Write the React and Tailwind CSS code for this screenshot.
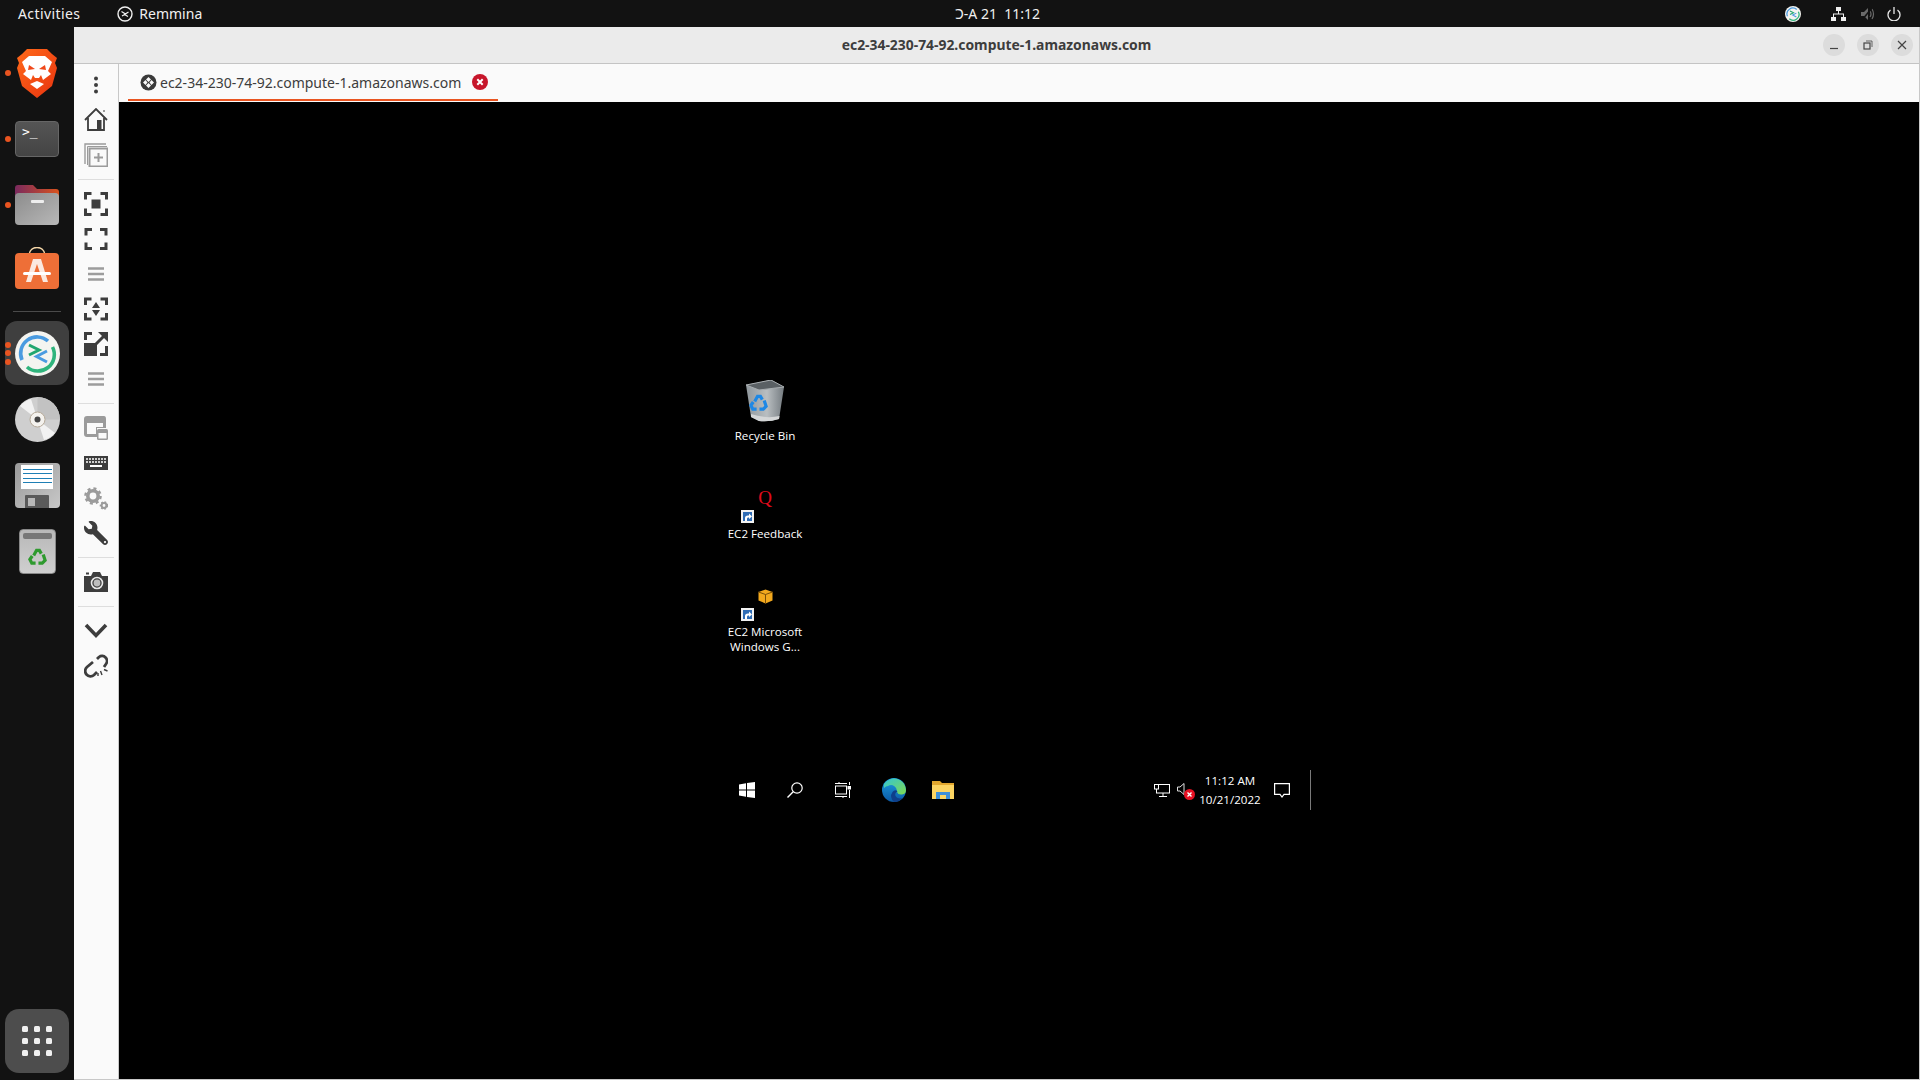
import { FaWrench } from 'react-icons/fa';

const HOST = 'ec2-34-230-74-92.compute-1.amazonaws.com';

const RemminaLogo = ({ size = 45 }) => (
  <svg width={size} height={size} viewBox="0 0 45 45">
    <circle cx="22.5" cy="22.5" r="22.5" fill="#f4f4f0" />
    <path d="M7 29 A16.5 16.5 0 0 1 33 10" fill="none" stroke="#4a9be0" strokeWidth="3.6" />
    <path d="M37.5 16 A16.5 16.5 0 0 1 12 36" fill="none" stroke="#2fb47c" strokeWidth="3.6" />
    <path d="M14 14 L24 19 L14 24" fill="none" stroke="#21a66f" strokeWidth="3" />
    <path d="M32 20 L21.5 25.5 L32 31" fill="none" stroke="#4a9be0" strokeWidth="3" />
  </svg>
);

const BraveLogo = () => (
  <svg width="40" height="49" viewBox="0 0 40 49">
    <defs>
      <linearGradient id="brave" x1="0" y1="0" x2="1" y2="1">
        <stop offset="0" stopColor="#ff6a1a" />
        <stop offset="1" stopColor="#e8330f" />
      </linearGradient>
    </defs>
    <path d="M10 0 H30 L35 5 L40 9 L38 14 L40 19 L35 37 L20 49 L5 37 L0 19 L2 14 L0 9 L5 5 Z" fill="url(#brave)" />
    <path d="M5 13 L12 7 H28 L35 13 L31 22 L34 25 L26 31 L24 26 L22 29 H18 L16 26 L14 31 L6 25 L9 22 Z" fill="#fff" />
    <path d="M13 35 L20 32 L27 35 L20 40 Z" fill="#fff" />
    <path d="M12 16 L18 20 L11 21 Z M28 16 L22 20 L29 21 Z" fill="#f0481a" />
  </svg>
);

const TerminalIcon = () => (
  <div className="w-[44px] h-[36px] rounded-[4px] bg-gradient-to-b from-[#555] to-[#444] border border-[#666] relative">
    <span className="absolute left-[6px] top-[1px] text-[13px] leading-[18px] text-white font-['DejaVu_Sans_Mono',monospace]">&gt;_</span>
  </div>
);

const FilesIcon = () => (
  <svg width="44" height="40" viewBox="0 0 44 40">
    <defs>
      <linearGradient id="folderTop" x1="0" y1="0" x2="1" y2="0">
        <stop offset="0" stopColor="#7a2a5e" />
        <stop offset="1" stopColor="#d9531e" />
      </linearGradient>
      <linearGradient id="folderBody" x1="0" y1="0" x2="1" y2="1">
        <stop offset="0" stopColor="#8c8c8c" />
        <stop offset="1" stopColor="#b8b8b8" />
      </linearGradient>
    </defs>
    <path d="M3 0 H18 L22 4 H41 Q44 4 44 7 V20 H0 V3 Q0 0 3 0 Z" fill="url(#folderTop)" />
    <rect x="0" y="8" width="44" height="32" rx="4" fill="url(#folderBody)" />
    <rect x="16" y="15" width="13" height="3" rx="1" fill="#eee" />
  </svg>
);

const StoreIcon = () => (
  <svg width="44" height="42" viewBox="0 0 44 42">
    <path d="M14 8 C15 -2 29 -2 30 8" fill="none" stroke="#f5d7a8" strokeWidth="1.6" />
    <rect x="0" y="6" width="44" height="36" rx="4" fill="#ee6f37" />
    <path d="M18 12 H26 L33 35 H28 L22 17 L16 35 H11 Z" fill="#fbe9df" />
    <rect x="8" y="25" width="28" height="3" rx="1.5" fill="#fff" />
  </svg>
);

const DiscIcon = () => (
  <svg width="45" height="45" viewBox="0 0 45 45">
    <circle cx="22.5" cy="22.5" r="22.5" fill="#cfcfcf" />
    <path d="M22.5 22.5 L5 9 A22 22 0 0 1 16 2 Z" fill="#f2f2f2" />
    <path d="M22.5 22.5 L40 36 A22 22 0 0 1 29 43 Z" fill="#f2f2f2" />
    <path d="M22.5 22.5 L22.5 0 A22.5 22.5 0 0 1 45 22.5 Z" fill="#c2c2c2" />
    <circle cx="22.5" cy="22.5" r="7.5" fill="#f4f2ee" stroke="#b5a998" />
    <circle cx="22.5" cy="22.5" r="3" fill="#444" />
  </svg>
);

const FloppyIcon = () => (
  <div className="w-[45px] h-[45px] rounded-[4px] bg-gradient-to-br from-[#9a9a9a] to-[#c8c8c8] relative overflow-hidden">
    <div className="mx-auto mt-[2px] w-[32px] h-[24px] bg-white flex flex-col gap-[3.5px] pt-[4px] px-[1.5px]">
      <div className="h-px bg-[#1f7fb5]" />
      <div className="h-px bg-[#1f7fb5]" />
      <div className="h-px bg-[#1f7fb5]" />
      <div className="h-px bg-[#1f7fb5]" />
    </div>
    <div className="absolute left-[10px] bottom-0 w-[24px] h-[13px] bg-[#5a5a5a] rounded-t-[1px]">
      <div className="ml-[3px] mt-[3px] w-[7px] h-[8px] bg-[#b8b8b8]" />
    </div>
  </div>
);

const RecycleGlyph = ({ size, color }) => (
  <svg width={size} height={size} viewBox="0 0 20 20" fill="none" stroke={color} strokeWidth="3.4">
    <path d="M6 9 L9 3.5 H12 L14 7" />
    <path d="M16 8 L18 14 L15 17 H11" />
    <path d="M8 17 H4 L2 13 L4.5 9.5" />
  </svg>
);

const TrashIcon = () => (
  <div className="w-[37px] h-[45px] rounded-[4px] bg-gradient-to-b from-[#b8b8b8] to-[#cfcfcf] border border-[#888] relative flex items-end justify-center pb-[7px]">
    <div className="absolute left-[3px] right-[3px] top-[3px] h-[6px] rounded-[2px] bg-[#777]" />
    <RecycleGlyph size={19} color="#2e9a2e" />
  </div>
);

const Dot = () => <div className="w-[6px] h-[6px] rounded-full bg-[#e95420]" />;

// one row per launcher, the height holds the vertical rhythm of the dock
const DockItem = ({ children, height, dots = 0, className = '' }) => (
  <div className={`relative flex items-center justify-center shrink-0 ${className}`} style={{ height }}>
    {dots > 0 && (
      <div className="absolute left-[5px] top-0 bottom-0 flex flex-col justify-center gap-[2.5px]">
        {Array.from({ length: dots }).map((_, i) => <Dot key={i} />)}
      </div>
    )}
    {children}
  </div>
);

const Dock = () => (
  <div className="w-[74px] shrink-0 bg-[#121212] flex flex-col">
    <DockItem height={66} dots={1} className="mt-[13px]"><BraveLogo /></DockItem>
    <DockItem height={66} dots={1}><TerminalIcon /></DockItem>
    <DockItem height={66} dots={1}><FilesIcon /></DockItem>
    <DockItem height={64} className="-mt-[2px]"><StoreIcon /></DockItem>
    <div className="mx-[13px] mt-[11px] h-px bg-[#4a4a4a] shrink-0" />
    <div className="h-[9px] shrink-0" />
    <div className="relative mx-[5px] h-[64px] rounded-[12px] bg-[#3f3f3f] flex items-center justify-center shrink-0">
      <div className="absolute left-0 top-0 bottom-0 flex flex-col justify-center gap-[2.5px]">
        <Dot /><Dot /><Dot />
      </div>
      <RemminaLogo />
    </div>
    <DockItem height={66} className="mt-[1px]"><DiscIcon /></DockItem>
    <DockItem height={66}><FloppyIcon /></DockItem>
    <DockItem height={66}><TrashIcon /></DockItem>
    <div className="mt-auto mx-[5px] mb-[7px] h-[64px] rounded-[14px] bg-[#4d4d4d] grid grid-cols-[6px_6px_6px] gap-[6px] place-content-center shrink-0">
      {Array.from({ length: 9 }).map((_, i) => (
        <div key={i} className="w-[6px] h-[6px] rounded-[1.5px] bg-[#f0f0f0]" />
      ))}
    </div>
  </div>
);

const TopBar = () => (
  <div className="h-[27px] shrink-0 bg-[#121212] flex items-center relative text-[14px] text-[#f0f0f0] font-['Noto_Sans',sans-serif]">
    <span className="ml-[18px] tracking-[0.4px]">Activities</span>
    <svg className="ml-[37px]" width="16" height="16" viewBox="0 0 16 16" fill="none" stroke="#f0f0f0">
      <circle cx="8" cy="8" r="7" strokeWidth="1.4" />
      <path d="M4.5 5.5 L8.5 8 L5 10 M11.5 6 L7.5 8.5 L11 10.5" strokeWidth="1.2" />
    </svg>
    <span className="ml-[6px]">Remmina</span>
    <span className="absolute left-[955px] whitespace-pre">Ɔ-A 21  11:12</span>
    <div className="ml-auto flex items-center">
      <RemminaLogo size={16} />
      <svg className="ml-[30px]" width="15" height="14" viewBox="0 0 15 14" fill="#f0f0f0">
        <rect x="5" y="0" width="5" height="4" />
        <rect x="0" y="10" width="5" height="4" />
        <rect x="10" y="10" width="5" height="4" />
        <path d="M7 4 H8 V6.5 H13 V10 H12 V7.5 H3 V10 H2 V6.5 H7 Z" />
      </svg>
      <svg className="ml-[15px]" width="14" height="14" viewBox="0 0 14 14" fill="none">
        <path d="M0 5 H3 L7 1 V13 L3 9 H0 Z" fill="#6a6a6a" />
        <path d="M9 4 Q11 7 9 10 M11 2 Q14 7 11 12" stroke="#6a6a6a" strokeWidth="1.2" />
        <path d="M1 13 L11 1" stroke="#121212" strokeWidth="1.6" />
      </svg>
      <svg className="ml-[12px] mr-[19px]" width="14" height="14" viewBox="0 0 14 14" fill="none" stroke="#e8e8e8" strokeWidth="1.3">
        <path d="M3.5 3 A6 6 0 1 0 10.5 3 M7 0 V7" />
      </svg>
    </div>
  </div>
);

const WinButton = ({ children }) => (
  <div className="w-[22px] h-[22px] rounded-full bg-[#dcdcdc] flex items-center justify-center">{children}</div>
);

const TitleBar = () => (
  <div className="h-[37px] shrink-0 bg-[#ebebeb] border-b border-[#c4c4c4] flex items-center relative">
    <div className="flex-1 text-center text-[13.9px] font-bold text-[#3d3d3d] font-['Noto_Sans',sans-serif]">{HOST}</div>
    <div className="absolute right-[6px] top-[7px] flex gap-[12px]">
      <WinButton>
        <svg width="10" height="10" viewBox="0 0 10 10"><path d="M1 8.5 H9" stroke="#444" strokeWidth="1.2" /></svg>
      </WinButton>
      <WinButton>
        <svg width="10" height="10" viewBox="0 0 10 10" fill="none" stroke="#444"><rect x="1" y="3" width="6" height="6" strokeWidth="1.2" /><path d="M3 1 H9 V7" strokeWidth="0.8" /></svg>
      </WinButton>
      <WinButton>
        <svg width="10" height="10" viewBox="0 0 10 10"><path d="M1 1 L9 9 M9 1 L1 9" stroke="#444" strokeWidth="1.2" /></svg>
      </WinButton>
    </div>
  </div>
);

const dark = '#3d3d3d';
const soft = '#9b9b9b';

const Corners = ({ x = 1.5, y = 1.5, w = 21, h = 21, c = 6 }) => (
  <path
    d={`M${x} ${y + c} V${y} H${x + c} M${x + w - c} ${y} H${x + w} V${y + c} M${x + w} ${y + h - c} V${y + h} H${x + w - c} M${x + c} ${y + h} H${x} V${y + h - c}`}
    fill="none"
    stroke={dark}
    strokeWidth="3"
  />
);

const Glyph = ({ children }) => (
  <svg width="24" height="24" viewBox="0 0 24 24">{children}</svg>
);

const Lines = () => (
  <Glyph>
    <path d="M4 6.5 H20 M4 12 H20 M4 17.5 H20" stroke="#9c9c9c" strokeWidth="2.4" />
  </Glyph>
);

const toolIcons = {
  dots: <Glyph><circle cx="12" cy="5.5" r="2" fill={dark} /><circle cx="12" cy="12" r="2" fill={dark} /><circle cx="12" cy="18.5" r="2" fill={dark} /></Glyph>,
  home: (
    <Glyph>
      <path d="M1 12 L12 1 L23 12" fill="none" stroke={dark} strokeWidth="1.8" />
      <path d="M4 10 V22 H20 V10" fill="none" stroke={dark} strokeWidth="1.8" />
      <rect x="13" y="12" width="4.5" height="10" fill={dark} />
      <rect x="19" y="2" width="2" height="2" fill={soft} />
    </Glyph>
  ),
  add: (
    <Glyph>
      <path d="M1 21 V1 H22" fill="none" stroke={soft} strokeWidth="1.4" />
      <path d="M3.5 22 V3.5 H23" fill="none" stroke={soft} strokeWidth="1" />
      <rect x="5.5" y="5.5" width="18" height="18" fill="#fafafa" stroke={soft} strokeWidth="2" />
      <path d="M14.5 10 V19 M10 14.5 H19" stroke={soft} strokeWidth="2" />
    </Glyph>
  ),
  scale: <Glyph><Corners /><rect x="7.5" y="7.5" width="9" height="9" fill={dark} /></Glyph>,
  fullscreen: <Glyph><Corners x={2} y={2.5} w={20} h={19} /></Glyph>,
  lines: <Lines />,
  scaleArrows: (
    <Glyph>
      <Corners y={2} h={20} />
      <path d="M12 5 L16 11 H8 Z M12 19 L8 13 H16 Z" fill={dark} />
    </Glyph>
  ),
  expand: (
    <Glyph>
      <rect x="0" y="11" width="13" height="13" fill={dark} />
      <path d="M0 8 V0 H8 V3 H3 V8 Z M16 24 V21 H21 V14 H24 V24 Z" fill={dark} />
      <path d="M12 12 L20 4" stroke={dark} strokeWidth="3" />
      <path d="M14 0 H24 V10 Z" fill={dark} />
    </Glyph>
  ),
  window: (
    <Glyph>
      <path d="M0 3 Q0 0 3 0 H20 Q22 0 22 3 V12 H13 V21 H3 Q0 21 0 18 Z" fill={soft} />
      <path d="M3 7 H19 V11 H12 V18 H3 Z" fill="#fafafa" />
      <rect x="13" y="13" width="11" height="11" rx="1.5" fill={soft} />
      <rect x="14.5" y="17" width="8" height="5.5" fill="#fafafa" />
    </Glyph>
  ),
  keyboard: (
    <Glyph>
      <rect x="0" y="5" width="24" height="14" fill={dark} />
      <path d="M2 8 H22 M2 11 H22" stroke="#fff" strokeWidth="1.6" strokeDasharray="2 1" />
      <path d="M6 15 H18" stroke="#fff" strokeWidth="2" />
    </Glyph>
  ),
  gears: (
    <Glyph>
      <circle cx="9" cy="10" r="5.2" fill="none" stroke={soft} strokeWidth="3.6" />
      <circle cx="9" cy="10" r="7.6" fill="none" stroke={soft} strokeWidth="2.4" strokeDasharray="3 3" />
      <circle cx="20" cy="19.5" r="2.4" fill="none" stroke={soft} strokeWidth="2" />
      <circle cx="20" cy="19.5" r="3.6" fill="none" stroke={soft} strokeWidth="1.4" strokeDasharray="1.8 1.6" />
    </Glyph>
  ),
  wrench: <FaWrench className="-scale-x-100" size={24} color={dark} />,
  camera: (
    <Glyph>
      <path d="M0 6 H7 L9 2 H16 L18 6 H24 V22 H0 Z" fill={dark} />
      <rect x="2" y="2.5" width="3" height="2" fill={dark} />
      <circle cx="13" cy="13" r="5.5" fill="none" stroke="#e8e8e8" strokeWidth="1.6" />
      <circle cx="13" cy="13" r="3.4" fill="#bdbdbd" />
    </Glyph>
  ),
  chevron: <Glyph><path d="M2 6 L12 16.5 L22 6" fill="none" stroke={dark} strokeWidth="3.6" /></Glyph>,
  unlink: (
    <Glyph>
      <path d="M13 5 L15 3 A5 5 0 0 1 22 10 L20 13" fill="none" stroke={dark} strokeWidth="2.8" />
      <path d="M9 8 L3 13 A5 5 0 0 0 10 21 L13 18" fill="none" stroke={dark} strokeWidth="2.8" />
      <path d="M16.5 17 L18 21 M20 15.5 L23.5 17 M14 19 L14 22" stroke={dark} strokeWidth="1.4" />
    </Glyph>
  ),
};

const Tool = ({ name }) => (
  <div className="h-[35px] shrink-0 flex items-center justify-center">{toolIcons[name]}</div>
);

const ToolSep = () => (
  <div className="h-[14px] shrink-0 flex items-center">
    <div className="mx-[4px] w-full h-px bg-[#dedede]" />
  </div>
);

const Toolbar = () => (
  <div className="w-[45px] shrink-0 bg-[#fafafa] border-r border-[#c8c8c8] flex flex-col pt-[3px]">
    <Tool name="dots" />
    <Tool name="home" />
    <Tool name="add" />
    <ToolSep />
    <Tool name="scale" />
    <Tool name="fullscreen" />
    <Tool name="lines" />
    <Tool name="scaleArrows" />
    <Tool name="expand" />
    <Tool name="lines" />
    <ToolSep />
    <Tool name="window" />
    <Tool name="keyboard" />
    <Tool name="gears" />
    <Tool name="wrench" />
    <ToolSep />
    <Tool name="camera" />
    <ToolSep />
    <Tool name="chevron" />
    <Tool name="unlink" />
  </div>
);

const TabBar = () => (
  <div className="h-[38px] shrink-0 bg-[#fafafa] flex">
    <div className="ml-[9px] w-[370px] h-[37px] border-b-[2px] border-[#e95420] flex items-center pl-[12px] pt-[1px]">
      <svg width="17" height="17" viewBox="0 0 17 17">
        <circle cx="8.5" cy="8.5" r="8" fill="#3a3a3a" />
        <path d="M8.5 3 L11 5.5 L8.5 8 L6 5.5 Z M8.5 9 L11 11.5 L8.5 14 L6 11.5 Z M3 8.5 L5.5 6 L7.5 8.5 L5.5 11 Z M14 8.5 L11.5 6 L9.5 8.5 L11.5 11 Z" fill="#fafafa" />
      </svg>
      <span className="ml-[3px] text-[14px] text-[#3d3d3d] font-['Noto_Sans',sans-serif]">{HOST}</span>
      <svg className="ml-[11px]" width="16" height="16" viewBox="0 0 16 16">
        <circle cx="8" cy="8" r="8" fill="#c7162b" />
        <path d="M5.3 5.3 L10.7 10.7 M10.7 5.3 L5.3 10.7" stroke="#fff" strokeWidth="2" />
      </svg>
    </div>
  </div>
);

const Shortcut = () => (
  <svg width="13" height="13" viewBox="0 0 13 13">
    <rect width="13" height="13" fill="#f2f2f2" />
    <rect x="2" y="2" width="9" height="9" fill="#2f6cb5" />
    <path d="M4 11 V8 Q4 5.5 7 5.5 H8 V3.5 L11 6.5 L8 9 V7.5 H7 Q6 7.5 6 9 V11 Z" fill="#fff" />
  </svg>
);

const RecycleBin = () => (
  <svg width="38" height="42" viewBox="0 0 38 42">
    <defs>
      <linearGradient id="bin" x1="0" y1="0" x2="1" y2="0">
        <stop offset="0" stopColor="#8f979c" />
        <stop offset="0.55" stopColor="#b9bec1" />
        <stop offset="1" stopColor="#747b80" />
      </linearGradient>
    </defs>
    <path d="M0 5 L25 0 L38 7 L33 39 Q24 42 13 41 L5 37 Z" fill="url(#bin)" />
    <path d="M0 5 L25 0 L38 7 L13 10 Z" fill="#5a6064" stroke="#a8adb0" />
    <path d="M5 37 L13 41 Q24 42 33 39 L33.5 36 Q20 39 5 34 Z" fill="#d4d6d7" />
    <g transform="translate(3 13)"><RecycleGlyph size={19} color="#1e88e5" /></g>
  </svg>
);

const DesktopLabel = ({ children }) => (
  <div className="text-[11.6px] leading-[15px] text-white text-center font-['Open_Sans',sans-serif]">{children}</div>
);

const Tray = () => (
  <div className="absolute left-[1031px] top-[666px] h-[44px] flex items-center text-white font-['Open_Sans',sans-serif]">
    <div className="w-[24px] flex justify-center">
      <svg width="16" height="14" viewBox="0 0 16 14" fill="none" stroke="#fff">
        <rect x="2.5" y="1.5" width="13" height="8.5" />
        <rect x="0.5" y="1.5" width="4" height="4.5" fill="#000" />
        <path d="M9 10 V13 M5 13.5 H13" />
      </svg>
    </div>
    <div className="w-[22px] flex justify-center">
      <div className="relative w-[16px] h-[14px]">
        <svg width="10" height="12" viewBox="0 0 10 12" fill="none" stroke="#ddd"><path d="M0.5 4 H3 L7 0.5 V11.5 L3 8 H0.5 Z" /></svg>
        <svg className="absolute -right-[2px] -bottom-[3px]" width="11" height="11" viewBox="0 0 11 11">
          <circle cx="5.5" cy="5.5" r="5.5" fill="#e81123" />
          <path d="M3.5 3.5 L7.5 7.5 M7.5 3.5 L3.5 7.5" stroke="#fff" strokeWidth="1.4" />
        </svg>
      </div>
    </div>
    <div className="w-[68px] text-center text-[11.6px] leading-[19px]">
      <div>11:12 AM</div>
      <div>10/21/2022</div>
    </div>
    <div className="w-[36px] flex justify-center">
      <svg width="16" height="15" viewBox="0 0 16 15" fill="none" stroke="#fff" strokeWidth="1.2">
        <path d="M0.6 0.6 H15.4 V11.4 H10 L8 14 L6 11.4 H0.6 Z" />
      </svg>
    </div>
    <div className="ml-[10px] w-px h-[40px] bg-[#7a7a7a]" />
  </div>
);

const Taskbar = () => (
  <div className="absolute left-[604px] top-[666px] h-[44px] flex items-center">
    <div className="w-[48px] flex justify-center">
      <svg width="16" height="16" viewBox="0 0 16 16" fill="#fff">
        <path d="M0 2.4 L7 1.3 V7.6 H0 Z M8 1.1 L16 0 V7.6 H8 Z M0 8.4 H7 V14.7 L0 13.6 Z M8 8.4 H16 V16 L8 14.9 Z" />
      </svg>
    </div>
    <div className="w-[48px] flex justify-center">
      <svg width="16" height="16" viewBox="0 0 16 16" fill="none" stroke="#fff" strokeWidth="1.2">
        <circle cx="10" cy="6" r="5.2" />
        <path d="M6.2 9.8 L0.5 15.5" strokeWidth="1.4" />
      </svg>
    </div>
    <div className="w-[48px] flex justify-center">
      <svg width="16" height="16" viewBox="0 0 16 16" fill="none" stroke="#fff">
        <rect x="0.5" y="4" width="11" height="8" />
        <path d="M0 1.5 H12 M0 14.5 H12 M4 0 V2 M8 14 V16 M14.5 0 V3 M14.5 8 V16" />
        <rect x="13" y="4.5" width="3" height="2.5" fill="#fff" />
      </svg>
    </div>
    <div className="w-[54px] flex justify-center">
      <svg width="24" height="24" viewBox="0 0 24 24">
        <defs>
          <linearGradient id="edgeA" x1="0" y1="0" x2="1" y2="1">
            <stop offset="0" stopColor="#34c6d3" />
            <stop offset="1" stopColor="#7fd94e" />
          </linearGradient>
          <linearGradient id="edgeB" x1="0" y1="0" x2="0" y2="1">
            <stop offset="0" stopColor="#1b9de2" />
            <stop offset="1" stopColor="#0c59a4" />
          </linearGradient>
        </defs>
        <circle cx="12" cy="12" r="12" fill="url(#edgeB)" />
        <path d="M2 6 A12 12 0 0 1 24 12 Q24 16 20 16.5 Q16 17 15 14 A6 6 0 0 0 6 8 Q4 8 2 10 Z" fill="url(#edgeA)" />
        <path d="M12 24 Q7 19 10.5 14 Q13 11 15.5 13.5 Q12.5 14.5 13.5 18 Q15 21.5 20.5 20 Q17 24 12 24 Z" fill="#0f3f8a" />
      </svg>
    </div>
    <div className="w-[44px] flex justify-center">
      <svg width="22" height="20" viewBox="0 0 22 20">
        <path d="M0 1 H8 L10 3 H22 V19 H0 Z" fill="#e2a72e" />
        <rect x="0" y="5" width="22" height="14" fill="#fcd462" />
        <path d="M4 19 V12 H18 V19 H14 V15 H8 V19 Z" fill="#3e8fd8" />
      </svg>
    </div>
  </div>
);

// the remote Windows session is a free canvas, so its items keep their own places
const RemoteScreen = () => (
  <div className="flex-1 bg-black relative overflow-hidden">
    <div className="absolute left-[576px] top-[278px] w-[140px] flex flex-col items-center">
      <RecycleBin />
      <div className="mt-[6px]"><DesktopLabel>Recycle Bin</DesktopLabel></div>
    </div>
    <div className="absolute left-[576px] top-[385px] w-[140px] flex flex-col items-center">
      <div className="h-[22px] text-[19px] leading-[22px] text-[#e00b1c] font-['Liberation_Serif',serif]">Q</div>
      <div className="self-start ml-[46px] mt-[1px]"><Shortcut /></div>
      <div className="mt-[3px]"><DesktopLabel>EC2 Feedback</DesktopLabel></div>
    </div>
    <div className="absolute left-[576px] top-[487px] w-[140px] flex flex-col items-center">
      <svg width="15" height="15" viewBox="0 0 15 15">
        <path d="M7.5 0.5 L14.5 3 V11.5 L7.5 14.5 L0.5 11.5 V3 Z" fill="#f2a81d" />
        <path d="M0.5 3 L7.5 5.5 L14.5 3 M7.5 5.5 V14.5" fill="none" stroke="#7a4e08" />
      </svg>
      <div className="self-start ml-[46px] mt-[4px]"><Shortcut /></div>
      <div className="mt-[3px]"><DesktopLabel>EC2 Microsoft<br />Windows G...</DesktopLabel></div>
    </div>
    <Taskbar />
    <Tray />
  </div>
);

export default function App() {
  return (
    <div className="w-[1920px] h-[1080px] flex flex-col overflow-hidden bg-[#121212]">
      <TopBar />
      <div className="flex-1 flex min-h-0">
        <Dock />
        <div className="flex-1 flex flex-col min-w-0 border-r border-b border-[#c8c8c8]">
          <TitleBar />
          <div className="flex-1 flex min-h-0">
            <Toolbar />
            <div className="flex-1 flex flex-col min-w-0">
              <TabBar />
              <RemoteScreen />
            </div>
          </div>
        </div>
      </div>
    </div>
  );
}
